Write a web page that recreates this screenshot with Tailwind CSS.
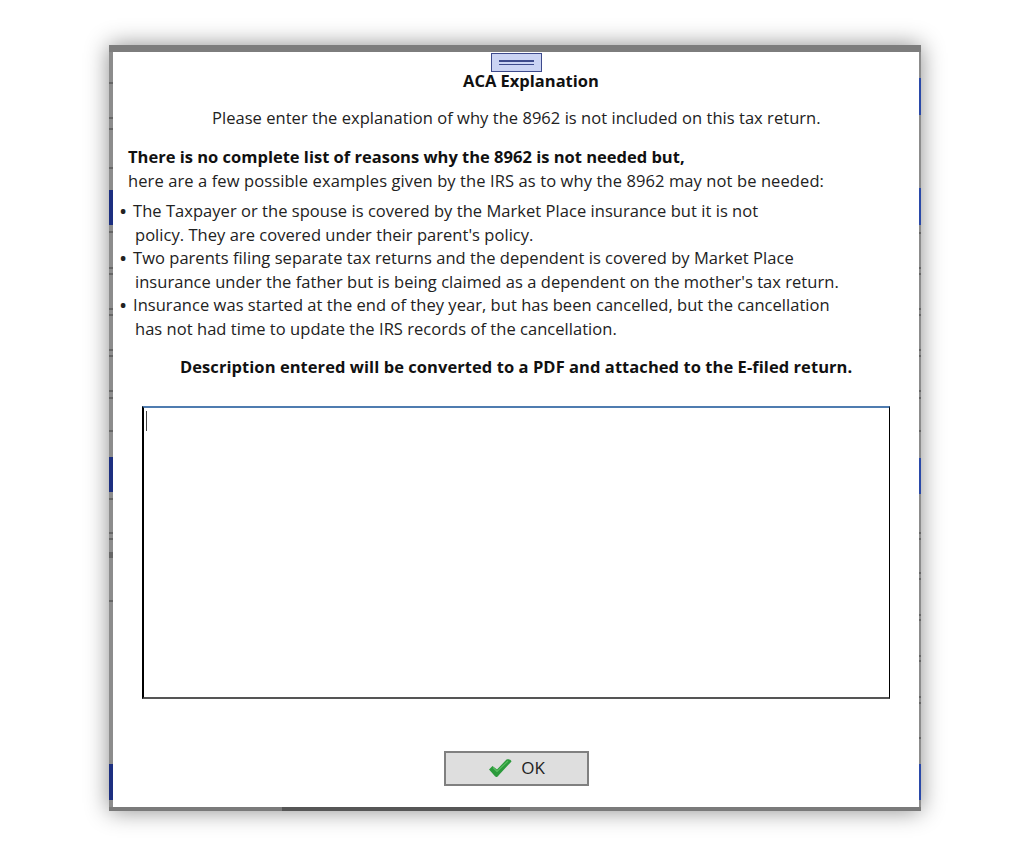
<!DOCTYPE html>
<html lang="en">
<head>
    <meta charset="UTF-8">
    <title>ACA Explanation</title>
    <script src="https://cdn.jsdelivr.net/npm/@tailwindcss/browser@4"></script>
</head>
<body class="bg-white h-screen overflow-hidden font-['Open_Sans',sans-serif] text-[#222]">

    <!-- dialog window -->
    <div class="relative ml-[109px] mt-[45px] w-[812px] h-[766px] flex flex-col shadow-[0_0_22px_rgba(0,0,0,0.45)]">
        <div class="h-[7px] bg-[#7d7d7d] shrink-0"></div>

        <div class="flex flex-1 min-h-0">
            <!-- left edge, bits of the window behind show through -->
            <svg class="w-[4px] h-[755px] shrink-0" viewBox="0 0 4 755">
                <rect width="4" height="755" fill="#8c8c8c"/>
                <g fill="#666">
                    <rect y="30" width="4" height="2"/><rect y="65" width="4" height="2"/><rect y="76" width="4" height="2"/><rect y="115" width="4" height="2"/>
                    <rect y="179" width="4" height="2"/><rect y="215" width="4" height="2"/><rect y="221" width="4" height="2"/>
                    <rect y="256" width="4" height="2"/><rect y="262" width="4" height="2"/><rect y="297" width="4" height="2"/>
                    <rect y="303" width="4" height="2"/><rect y="338" width="4" height="2"/><rect y="345" width="4" height="2"/>
                    <rect y="378" width="4" height="2"/><rect y="446" width="4" height="2"/><rect y="480" width="4" height="2"/>
                    <rect y="486" width="4" height="2"/><rect y="500" width="4" height="6"/><rect y="548" width="4" height="2"/>
                </g>
                <g fill="#1c2f80">
                    <rect y="138" width="4" height="35"/><rect y="405" width="4" height="35"/><rect y="712" width="4" height="36"/>
                </g>
            </svg>

            <div class="flex-1 bg-white flex flex-col">
                <h1 class="text-[16.5px] leading-[24px] mt-[17px] ml-[350px] font-bold text-[#111]">ACA Explanation</h1>
                <p class="text-[16.5px] leading-[24px] mt-[13px] ml-[99px] tracking-[0.04px]">Please enter the explanation of why the 8962 is not included on this tax return.</p>

                <p class="text-[16.5px] leading-[24px] mt-[15px] ml-[15px] font-bold text-[#111]">There is no complete list of reasons why the 8962 is not needed but,</p>
                <p class="text-[16.5px] leading-[24px] ml-[15px] tracking-[0.1px]">here are a few possible examples given by the IRS as to why the 8962 may not be needed:</p>

                <div class="mt-[6px] ml-[7px] text-[16.5px] leading-[23.6px] tracking-[0.04px]">
                    <p><span class="inline-block w-[13px] font-bold">•</span>The Taxpayer or the spouse is covered by the Market Place insurance but it is not</p>
                    <p class="ml-[15px]">policy. They are covered under their parent's policy.</p>
                    <p><span class="inline-block w-[13px] font-bold">•</span>Two parents filing separate tax returns and the dependent is covered by Market Place</p>
                    <p class="ml-[15px]">insurance under the father but is being claimed as a dependent on the mother's tax return.</p>
                    <p><span class="inline-block w-[13px] font-bold">•</span>Insurance was started at the end of they year, but has been cancelled, but the cancellation</p>
                    <p class="ml-[15px]">has not had time to update the IRS records of the cancellation.</p>
                </div>

                <p class="text-[16.5px] leading-[24px] mt-[14px] ml-[67px] font-bold text-[#111] tracking-[0.06px]">Description entered will be converted to a PDF and attached to the E-filed return.</p>

                <div class="mt-[27px] ml-[29px] w-[748px] h-[293px] border border-black border-l-2 border-t-2 border-t-[#4f7cb0] border-b-2 border-b-[#555] pl-[2px] pt-[3px] shrink-0">
                    <div class="w-[1px] h-[20px] bg-[#444]"></div>
                </div>

                <button class="mt-[52px] ml-[331px] w-[145px] h-[35px] bg-[#dedede] border-2 border-[#808080] flex items-center justify-center gap-[9px] text-[17px] shrink-0">
                    <svg width="24" height="20" viewBox="0 0 24 20">
                        <path d="M1 11.5 L4.5 8 L9 11.5 L18.5 1.5 C20.5 0.8 23 1.5 23.5 3.5 L10.5 17.5 C9.5 19.3 8 19.3 7 18.3 Z" fill="#2c9a3c"/>
                        <path d="M5 9.5 L9 13.5 L20 3" fill="none" stroke="#57bd5e" stroke-width="1.2"/>
                    </svg>
                    <span>OK</span>
                </button>
            </div>

            <!-- right edge -->
            <svg class="w-[2px] h-[755px] shrink-0" viewBox="0 0 2 755">
                <rect width="2" height="755" fill="#8c8c8c"/>
                <g fill="#666">
                    <rect y="180" width="2" height="2"/><rect y="215" width="2" height="2"/><rect y="221" width="2" height="2"/>
                    <rect y="256" width="2" height="2"/><rect y="262" width="2" height="2"/><rect y="297" width="2" height="2"/>
                    <rect y="303" width="2" height="2"/><rect y="338" width="2" height="2"/><rect y="345" width="2" height="2"/>
                    <rect y="378" width="2" height="2"/><rect y="480" width="2" height="2"/><rect y="486" width="2" height="2"/>
                    <rect y="520" width="2" height="2"/><rect y="526" width="2" height="2"/><rect y="562" width="2" height="2"/>
                    <rect y="567" width="2" height="2"/><rect y="603" width="2" height="2"/><rect y="608" width="2" height="2"/>
                    <rect y="644" width="2" height="2"/><rect y="650" width="2" height="2"/><rect y="685" width="2" height="2"/>
                </g>
                <g fill="#2a49a8">
                    <rect y="26" width="2" height="37"/><rect y="136" width="2" height="37"/><rect y="406" width="2" height="36"/><rect y="712" width="2" height="36"/>
                </g>
            </svg>
        </div>

        <!-- bottom edge is darker where the window behind lines up -->
        <div class="h-[4px] bg-[#7a7a7a] shrink-0 flex">
            <div class="w-[173px]"></div>
            <div class="w-[228px] bg-[#565656]"></div>
        </div>

        <!-- drag handle sits over the top edge -->
        <div class="absolute left-[382px] top-[8px] w-[51px] h-[19px] bg-[#cbd4f4] border border-[#3d4a8c] flex flex-col items-center justify-center gap-[2px]">
            <div class="w-[35px] h-[1.5px] bg-[#3d4a8c]"></div>
            <div class="w-[35px] h-[1.5px] bg-[#3d4a8c]"></div>
        </div>
    </div>
</body>
</html>
